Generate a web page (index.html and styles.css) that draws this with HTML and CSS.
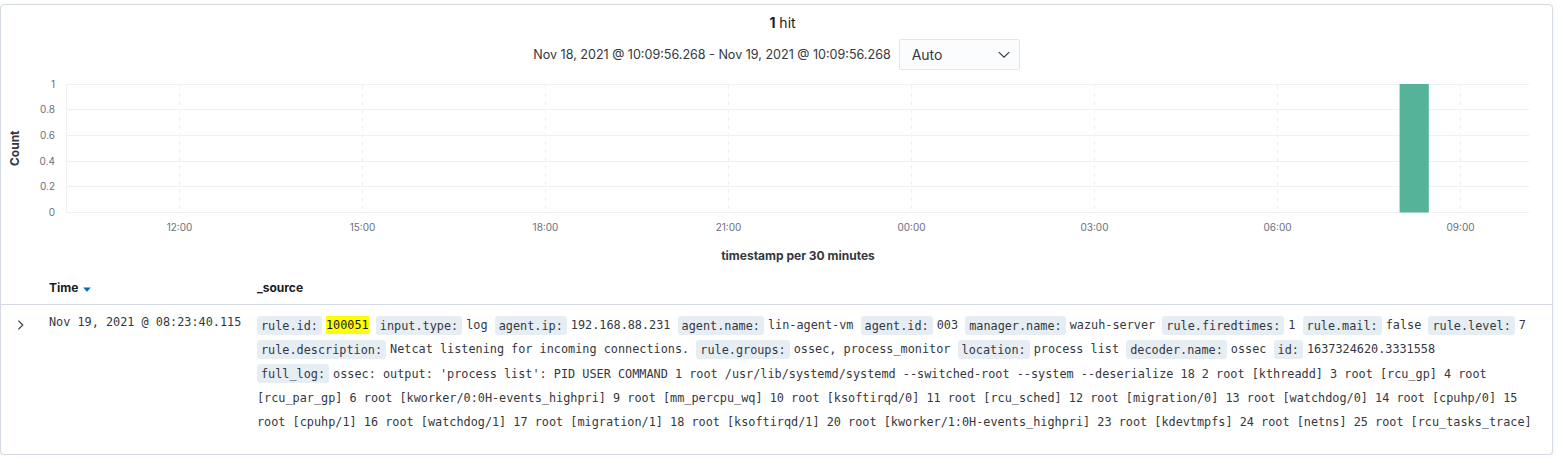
FILE: index.html
```html
<!DOCTYPE html>
<html lang="en">
<head>
<meta charset="utf-8">
<title>Discover</title>
<link rel="stylesheet" href="styles.css">
</head>
<body>
<div class="panel">
  <div class="hits"><strong>1</strong> hit</div>
  <div class="range">
    <span class="range-text">Nov 18, 2021 @ 10:09:56.268 - Nov 19, 2021 @ 10:09:56.268</span>
    <div class="select">
      <span>Auto</span>
      <svg class="select-caret" width="12" height="8" viewBox="0 0 12 8"><path d="M0.8 1.2 L6 6.2 L11.2 1.2" fill="none" stroke="#343741" stroke-width="1.1"/></svg>
    </div>
  </div>
  <svg class="chart" width="1551" height="202" viewBox="0 0 1551 202">
    <g class="grid-h" stroke="#EEF0F3" stroke-width="1">
      <line x1="65" y1="14.5" x2="1528.5" y2="14.5"/>
      <line x1="65" y1="39.5" x2="1528.5" y2="39.5"/>
      <line x1="65" y1="65.5" x2="1528.5" y2="65.5"/>
      <line x1="65" y1="91.5" x2="1528.5" y2="91.5"/>
      <line x1="65" y1="116.5" x2="1528.5" y2="116.5"/>
      <line x1="65" y1="142.5" x2="1528.5" y2="142.5"/>
      <line x1="65.5" y1="14" x2="65.5" y2="143"/>
    </g>
    <g class="grid-v" stroke="#EEF0F3" stroke-width="1" stroke-dasharray="4 4">
      <line x1="178.5" y1="15" x2="178.5" y2="142"/>
      <line x1="361.5" y1="15" x2="361.5" y2="142"/>
      <line x1="544.5" y1="15" x2="544.5" y2="142"/>
      <line x1="727.5" y1="15" x2="727.5" y2="142"/>
      <line x1="910.5" y1="15" x2="910.5" y2="142"/>
      <line x1="1093.5" y1="15" x2="1093.5" y2="142"/>
      <line x1="1276.5" y1="15" x2="1276.5" y2="142"/>
      <line x1="1459.5" y1="15" x2="1459.5" y2="142"/>
    </g>
    <rect x="1398.6" y="14" width="29.2" height="128.5" fill="#54B399"/>
    <g class="tick" text-anchor="end">
      <text x="54" y="17.6">1</text>
      <text x="54" y="43.3">0.8</text>
      <text x="54" y="69">0.6</text>
      <text x="54" y="94.7">0.4</text>
      <text x="54" y="120.4">0.2</text>
      <text x="54" y="146.1">0</text>
    </g>
    <g class="tick" text-anchor="middle">
      <text x="178.5" y="161">12:00</text>
      <text x="361.5" y="161">15:00</text>
      <text x="544.5" y="161">18:00</text>
      <text x="727.5" y="161">21:00</text>
      <text x="910.5" y="161">00:00</text>
      <text x="1093.5" y="161">03:00</text>
      <text x="1276.5" y="161">06:00</text>
      <text x="1459.5" y="161">09:00</text>
    </g>
    <text class="axis-title" transform="translate(18.2 78.3) rotate(-90)" text-anchor="middle">Count</text>
    <text class="axis-title" x="797" y="190" text-anchor="middle">timestamp per 30 minutes</text>
  </svg>
  <div class="doc-table">
    <div class="thead">
      <div></div>
      <div class="th">Time <svg class="sort" width="8" height="5" viewBox="0 0 8 5"><path d="M0.3 0.6 H7.7 L4.6 4.2 Q4 4.8 3.4 4.2 Z" fill="#006BB4"/></svg></div>
      <div class="th">_source</div>
    </div>
    <div class="row">
      <div class="toggle"><svg width="10" height="10" viewBox="0 0 10 10"><path d="M3.4 0.6 L7.8 5 L3.4 9.4" fill="none" stroke="#343741" stroke-width="1.1"/></svg></div>
      <div class="time">Nov 19, 2021 @ 08:23:40.115</div>
      <dl class="source">
<dt>rule.id:</dt><dd><mark>100051</mark></dd>
<dt>input.type:</dt><dd>log</dd>
<dt>agent.ip:</dt><dd>192.168.88.231</dd>
<dt>agent.name:</dt><dd>lin-agent-vm</dd>
<dt>agent.id:</dt><dd>003</dd>
<dt>manager.name:</dt><dd>wazuh-server</dd>
<dt>rule.firedtimes:</dt><dd>1</dd>
<dt>rule.mail:</dt><dd>false</dd>
<dt>rule.level:</dt><dd>7</dd>
<dt>rule.description:</dt><dd>Netcat listening for incoming connections.</dd>
<dt>rule.groups:</dt><dd>ossec, process_monitor</dd>
<dt>location:</dt><dd>process list</dd>
<dt>decoder.name:</dt><dd>ossec</dd>
<dt>id:</dt><dd>1637324620.3331558</dd>
<dt>full_log:</dt><dd>ossec: output: 'process list': PID USER COMMAND 1 root /usr/lib/systemd/systemd --switched-root --system --deserialize 18 2 root [kthreadd] 3 root [rcu_gp] 4 root [rcu_par_gp] 6 root [kworker/0:0H-events_highpri] 9 root [mm_percpu_wq] 10 root [ksoftirqd/0] 11 root [rcu_sched] 12 root [migration/0] 13 root [watchdog/0] 14 root [cpuhp/0] 15 root [cpuhp/1] 16 root [watchdog/1] 17 root [migration/1] 18 root [ksoftirqd/1] 20 root [kworker/1:0H-events_highpri] 23 root [kdevtmpfs] 24 root [netns] 25 root [rcu_tasks_trace]</dd>
      </dl>
    </div>
  </div>
</div>
</body>
</html>
```
FILE: styles.css
```css
* { box-sizing: border-box; }

body {
  margin: 0;
  padding: 4px 5px 0 0;
  background: #ffffff;
  font-family: Inter, "Noto Sans", sans-serif;
  color: #343741;
}

.panel {
  border: 1px solid #D3DAE6;
  border-radius: 4px;
  background: #ffffff;
  box-shadow: 0 2px 2px -1px rgba(152, 162, 179, 0.3), 0 1px 5px -2px rgba(152, 162, 179, 0.3);
}

.hits {
  padding: 8px 0 0 12px;
  line-height: 20px;
  font-size: 14px;
  text-align: center;
  color: #1a1c21;
}

.hits strong { font-weight: 700; }

.range {
  display: flex;
  justify-content: center;
  align-items: center;
  gap: 8px;
  margin-top: 6px;
}

.range-text {
  font-size: 12.55px;
  color: #343741;
}

.select {
  width: 121px;
  height: 31px;
  display: flex;
  align-items: center;
  justify-content: space-between;
  padding: 0 9px 0 12px;
  background: #FBFCFD;
  border: 1px solid #E1E6EE;
  border-radius: 2px;
  font-size: 14px;
  color: #343741;
}

.select-caret { display: block; }

.chart { display: block; }

.chart .tick {
  font-family: Inter, "Noto Sans", sans-serif;
  font-size: 10px;
  fill: #69707D;
}

.chart .axis-title {
  font-family: Inter, "Noto Sans", sans-serif;
  font-size: 12px;
  font-weight: 700;
  fill: #343741;
}

.thead,
.row {
  display: grid;
  grid-template-columns: 48px 208px 1fr;
}

.thead {
  height: 33px;
  align-items: center;
  border-bottom: 1px solid #D3DAE6;
  font-size: 12px;
  font-weight: 700;
  color: #1a1c21;
}

.th {
  display: flex;
  align-items: center;
  gap: 5px;
  padding-bottom: 1px;
}

.sort { display: block; margin-top: 3px; }

.row {
  padding: 8px 14px 20px 0;
  font-family: "DejaVu Sans Mono", "Liberation Mono", monospace;
  font-size: 11.83px;
  color: #343741;
}

.toggle { padding: 6.5px 0 0 14px; }
.toggle svg { display: block; }

.time { line-height: 18px; }

.source {
  margin: 0;
  line-height: 24.25px;
}

.source dt {
  display: inline;
  background: #E6EEF4;
  padding: 2.5px 4px;
  margin-right: 4px;
  border-radius: 3px;
}

.source dd {
  display: inline;
  margin: 0;
}

.source mark {
  background: #FFFF00;
  color: #1a1c21;
  padding: 2px 0;
}
```
